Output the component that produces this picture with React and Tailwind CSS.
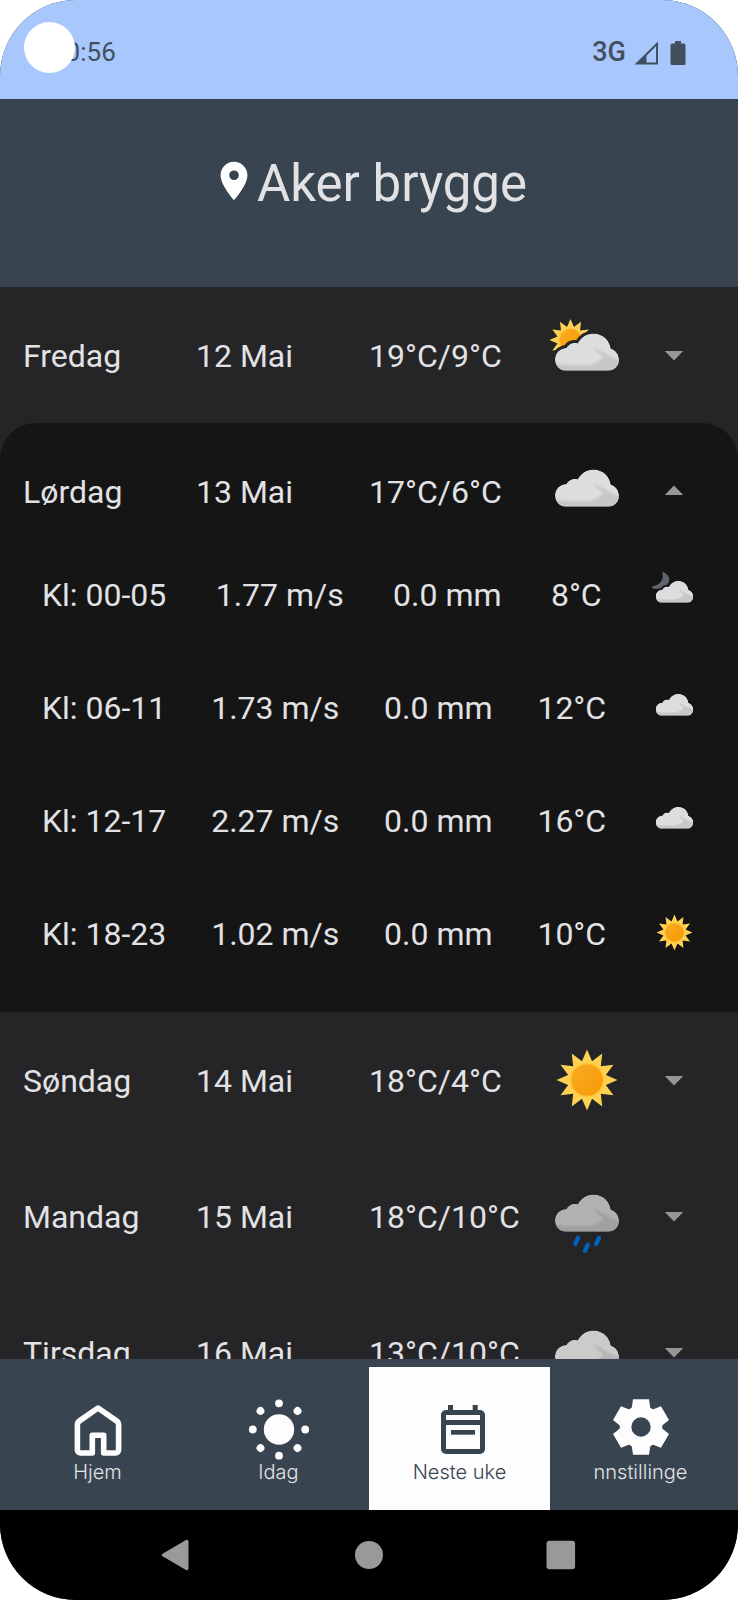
const DAYS = [
  { day: "Fredag", date: "12 Mai", temp: "19°C/9°C", icon: "partly" },
  {
    day: "Lørdag",
    date: "13 Mai",
    temp: "17°C/6°C",
    icon: "cloud",
    slots: [
      { time: "Kl: 00-05", wind: "1.77 m/s", rain: "0.0 mm", temp: "8°C", icon: "night" },
      { time: "Kl: 06-11", wind: "1.73 m/s", rain: "0.0 mm", temp: "12°C", icon: "cloud" },
      { time: "Kl: 12-17", wind: "2.27 m/s", rain: "0.0 mm", temp: "16°C", icon: "cloud" },
      { time: "Kl: 18-23", wind: "1.02 m/s", rain: "0.0 mm", temp: "10°C", icon: "sun" },
    ],
  },
  { day: "Søndag", date: "14 Mai", temp: "18°C/4°C", icon: "sun" },
  { day: "Mandag", date: "15 Mai", temp: "18°C/10°C", icon: "rain" },
  { day: "Tirsdag", date: "16 Mai", temp: "13°C/10°C", icon: "overcast" },
];

const CLOUD =
  "M-21.5 15.5C-27.5 15.5-32 10.5-32 4.5C-32-2-27-6.7-20.5-6.9C-19-10.8-14.5-13-9.3-11.7C-6.5-17.5-.5-21.6 6.5-21.6C15.500-21.600 22.800-15 23.800-6.500C28.600-5 32-.5 32 4.500C32 10.800 27.500 15.500 21.500 15.500Z";
const SHADE = "M7-7C13-6 19 1 34 6V18H-28L-33 8C-22 11-10 10 0 10C8 9 17 5 15 1C13-1 9-3 7-7Z";

const RAYS = Array.from({ length: 24 }, (_, i) => {
  const a = (i * Math.PI) / 12;
  const r = i % 2 ? 19.5 : 30.5;
  return `${(Math.sin(a) * r).toFixed(2)},${(-Math.cos(a) * r).toFixed(2)}`;
}).join(" ");

function IconDefs() {
  return (
    <svg className="absolute size-0" aria-hidden="true">
      <defs>
        <clipPath id="cloud-shape">
          <path d={CLOUD} />
        </clipPath>
        <filter id="soft" x="-20%" y="-20%" width="140%" height="140%">
          <feGaussianBlur stdDeviation="1.2" />
        </filter>
        <linearGradient id="sun-core" x1="0" y1="0" x2="1" y2="1">
          <stop offset="0" stopColor="#fbab22" />
          <stop offset="1" stopColor="#f49a06" />
        </linearGradient>
      </defs>
    </svg>
  );
}

function Sun() {
  return (
    <g>
      <polygon points={RAYS} fill="#ffd152" />
      <circle r="17.5" fill="#ffc93a" />
      <circle r="15.8" fill="url(#sun-core)" />
    </g>
  );
}

function Cloud({ fill, shade }) {
  return (
    <g clipPath="url(#cloud-shape)">
      <path d={CLOUD} fill={fill} />
      <path d={SHADE} fill={shade} filter="url(#soft)" />
    </g>
  );
}

function WeatherIcon({ kind, size }) {
  return (
    <svg viewBox="-40 -40 80 80" className={size} aria-hidden="true">
      {kind === "partly" && (
        <g>
          <g transform="translate(-16.5 -15) scale(.69)">
            <Sun />
          </g>
          <path d={CLOUD} fill="#252527" stroke="#252527" strokeWidth="6" />
        </g>
      )}
      {kind === "night" && (
        <g>
          <path d="M-21-37C-12-34-6-27-10-19C-14-10-26-5-38-9L-38-12C-25-15-17-22-21-37Z" fill="#5d646c" />
          <path d={CLOUD} fill="#151515" stroke="#151515" strokeWidth="6" />
        </g>
      )}
      {kind === "sun" && <Sun />}
      {(kind === "partly" || kind === "night" || kind === "cloud") && <Cloud fill="#dddddd" shade="#c8c8c8" />}
      {kind === "overcast" && <Cloud fill="#cbcbcb" shade="#b5b5b5" />}
      {kind === "rain" && (
        <g>
          <Cloud fill="#b2b2b2" shade="#a0a0a0" />
          <path d="M-9 22L-11.800 28M.8 28.800L-2 34.800M12 22L9.200 28" stroke="#0062bf" strokeWidth="4.200" strokeLinecap="round" />
        </g>
      )}
    </svg>
  );
}

function StatusBar() {
  return (
    <div className="relative flex h-[99px] shrink-0 items-center justify-between bg-[#a8c7fd] pl-[51px] pr-[52px] pt-[6px] text-[#434f5e]">
      <span className="text-[26px]">10:56</span>
      <span className="absolute left-6 top-[22px] size-[51px] rounded-full bg-white" />
      <div className="flex items-center">
        <span className="mr-2 text-[27px] font-medium">3G</span>
        <svg viewBox="0 0 24 24" className="size-6" aria-hidden="true">
          <path d="M24 .5V23.500H.5ZM22 5.300L12.500 14.700V21.500H22Z" fill="currentColor" fillRule="evenodd" />
        </svg>
        <svg viewBox="0 0 16 24" className="ml-3 h-6 w-4" aria-hidden="true">
          <path d="M5 0h6v2.500h3a1.500 1.500 0 0 1 1.500 1.500v18.500a1.500 1.500 0 0 1-1.500 1.500h-12a1.500 1.500 0 0 1-1.500-1.500V4A1.500 1.500 0 0 1 2 2.500h3z" fill="currentColor" />
        </svg>
      </div>
    </div>
  );
}

function Header() {
  return (
    <header className="flex shrink-0 items-start justify-center bg-[#38444f] pb-[77px] pt-[59px]">
      <svg viewBox="0 0 24 24" className="size-[46px] text-white" aria-hidden="true">
        <path
          d="M12 2C8.130 2 5 5.130 5 9c0 5.250 7 13 7 13s7-7.750 7-13c0-3.870-3.130-7-7-7zm0 9.500a2.500 2.500 0 1 1 0-5 2.500 2.500 0 0 1 0 5z"
          fill="currentColor"
        />
      </svg>
      <h1 className="text-[51px] leading-[52px]">Aker brygge</h1>
    </header>
  );
}

function Day({ item }) {
  const open = Boolean(item.slots);
  return (
    <li className={open ? "rounded-t-[36px] bg-[#151515]" : ""}>
      <button
        type="button"
        aria-expanded={open}
        className="grid h-[136px] w-full grid-cols-[173fr_173fr_173fr_90fr_84fr] items-center whitespace-nowrap pl-[23px] pr-[22px] text-left"
      >
        <span className="pt-px">{item.day}</span>
        <span className="pt-px">{item.date}</span>
        <span className="pt-px">{item.temp}</span>
        <WeatherIcon kind={item.icon} size="size-20 justify-self-center" />
        <svg viewBox="-10 -10 20 20" className="size-5 justify-self-center text-[#979797]" aria-hidden="true">
          <path d={open ? "M-9.200 4L9.200 4L0-5.500Z" : "M-9.200-4L9.200-4L0 5.500Z"} fill="currentColor" />
        </svg>
      </button>
      {open && (
        <ul className="flex flex-col gap-[45px] pb-[46px]">
          {item.slots.map((slot) => (
            <li key={slot.time} className="flex h-[68px] items-center justify-between whitespace-nowrap pl-[42px] pr-10">
              <span className="pt-[3px]">{slot.time}</span>
              <span className="pt-[3px]">{slot.wind}</span>
              <span className="pt-[3px]">{slot.rain}</span>
              <span className="pt-[3px]">{slot.temp}</span>
              <WeatherIcon kind={slot.icon} size="size-[47px]" />
            </li>
          ))}
        </ul>
      )}
    </li>
  );
}

function HomeIcon() {
  return (
    <path
      d="M32 11L50.500 23.900Q52.600 25.400 52.600 28V53a3 3 0 0 1-3 3H37.700V38.300H26.300V56H14.400a3 3 0 0 1-3-3V28Q11.400 25.400 13.500 23.900Z"
      fill="none"
      stroke="currentColor"
      strokeWidth="5.600"
      strokeLinejoin="round"
    />
  );
}

function TodayIcon() {
  return (
    <g fill="currentColor">
      <circle cx="32" cy="32.500" r="15.200" />
      {[0, 45, 90, 135, 180, 225, 270, 315].map((angle) => (
        <circle key={angle} cx="32" cy="6.300" r="3.900" transform={`rotate(${angle} 32 32.5)`} />
      ))}
    </g>
  );
}

function WeekIcon() {
  return (
    <g fill="currentColor">
      <path
        fillRule="evenodd"
        d="M20 8h5v5h19.700V8h5v5H52a5 5 0 0 1 5 5v34a5 5 0 0 1-5 5H18a5 5 0 0 1-5-5V18a5 5 0 0 1 5-5h2zM18 18v5h34v-5zM18 28v24h34V28z"
      />
      <rect x="23" y="33" width="24" height="4.700" />
    </g>
  );
}

function SettingsIcon() {
  return (
    <g transform="translate(32 30)">
      <circle r="15.200" fill="none" stroke="currentColor" strokeWidth="11" />
      {[0, 60, 120, 180, 240, 300].map((angle) => (
        <path key={angle} d="M-8-27.700H8L9.200-19.500L12.500-16.500H-12.500L-9.200-19.500Z" fill="currentColor" transform={`rotate(${angle})`} />
      ))}
    </g>
  );
}

const TABS = [
  { label: "Hjem", Icon: HomeIcon },
  { label: "Idag", Icon: TodayIcon },
  { label: "Neste uke", Icon: WeekIcon, active: true },
  { label: "nnstillinge", Icon: SettingsIcon },
];

function TabBar() {
  return (
    <nav className="grid shrink-0 grid-cols-4 bg-[#38444f] px-[7px] pt-2">
      {TABS.map(({ label, Icon, active }) => (
        <button
          key={label}
          type="button"
          aria-current={active ? "page" : undefined}
          className={
            active
              ? "flex h-[143px] flex-col items-center bg-[#fdfdfd] pt-[30px] text-[#38444f]"
              : "flex h-[143px] flex-col items-center pt-[30px] text-[#fdfdfd]"
          }
        >
          <svg viewBox="0 0 64 64" className="size-16" aria-hidden="true">
            <Icon />
          </svg>
          <span
            className={
              active
                ? "font-[Inter,sans-serif] text-[20px] font-light leading-[22px]"
                : "font-[Inter,sans-serif] text-[20px] font-light leading-[22px] text-[#e2e2e5]"
            }
          >
            {label}
          </span>
        </button>
      ))}
    </nav>
  );
}

function SystemBar() {
  return (
    <div className="flex h-[90px] shrink-0 items-center justify-center gap-40 bg-black text-[#999999]">
      <button type="button" aria-label="Tilbake">
        <svg viewBox="0 0 32 32" className="size-8" aria-hidden="true">
          <path d="M2 14.500L25 1Q27.500 0 27.500 3V29Q27.500 32 25 31L2 17.500Q-.500 16 2 14.500Z" fill="currentColor" />
        </svg>
      </button>
      <button type="button" aria-label="Hjem">
        <svg viewBox="0 0 32 32" className="size-8" aria-hidden="true">
          <circle cx="16" cy="16" r="14" fill="currentColor" />
        </svg>
      </button>
      <button type="button" aria-label="Oversikt">
        <svg viewBox="0 0 32 32" className="size-8" aria-hidden="true">
          <rect x="1.500" y="1.700" width="28.600" height="28.600" rx="3" fill="currentColor" />
        </svg>
      </button>
    </div>
  );
}

export default function App() {
  return (
    <div className="bg-white">
      <IconDefs />
      <div className="flex h-screen flex-col overflow-hidden rounded-[76px] bg-[#252527] font-[Roboto,sans-serif] text-[#e2e2e5]">
        <StatusBar />
        <Header />
        <main className="min-h-0 flex-1 overflow-y-auto text-[32px] leading-9 [scrollbar-width:none]">
          <ul>
            {DAYS.map((item) => (
              <Day key={item.day} item={item} />
            ))}
          </ul>
        </main>
        <TabBar />
        <SystemBar />
      </div>
    </div>
  );
}
